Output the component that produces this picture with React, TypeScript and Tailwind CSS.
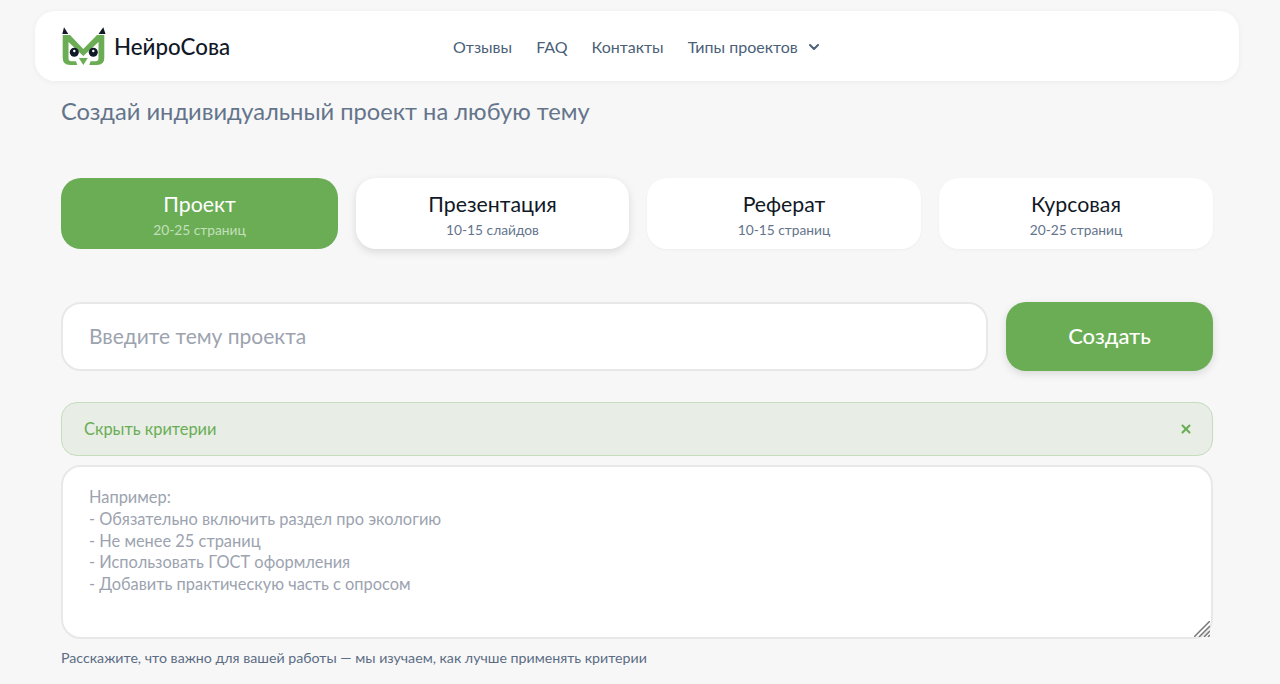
import { useState } from "react";
import { ChevronDown, X } from "lucide-react";

const tabs = [
  { title: "Проект", sub: "20-25 страниц" },
  { title: "Презентация", sub: "10-15 слайдов" },
  { title: "Реферат", sub: "10-15 страниц" },
  { title: "Курсовая", sub: "20-25 страниц" },
];

const Logo = () => (
  <svg width="46" height="40" viewBox="0 0 46 40" fill="none">
    <path d="M3 1.3 L7.3 8 L1.3 8 Z" fill="#111827" />
    <path d="M42.3 1.3 L44.5 8 L37.5 8 Z" fill="#111827" />
    <path
      d="M1.7 9 L9 9 L22.3 23 L36 9 L43.3 9 L43.3 32 Q43.3 39 36 39 L28.3 39 L29.5 35.2 L34.5 35.2 Q37.5 35.2 37.5 32 L37.5 16 L22.3 30 L7.5 16 L7.5 32 Q7.5 35.2 10.5 35.2 L15 35.2 L16.3 39 L9 39 Q1.7 39 1.7 32 Z"
      fill="#6aad55"
    />
    <circle cx="13.3" cy="26.3" r="4.5" fill="#111827" />
    <circle cx="32.3" cy="26.3" r="4.5" fill="#111827" />
    <circle cx="13.3" cy="25" r="1.2" fill="#fff" />
    <circle cx="32.3" cy="25" r="1.2" fill="#fff" />
    <path d="M17.8 32 L26.8 32 L22.3 39 Z" fill="#6aad55" />
  </svg>
);

export default function App() {
  const [active] = useState(0);

  return (
    <div className="h-[684px] overflow-hidden bg-[#f7f7f7] font-['Lato','Noto_Sans',sans-serif]">
      <div className="px-[35px] pt-[11px] pr-[41px]">
        <header className="flex h-[70px] items-center rounded-[20px] bg-white pl-[26px] shadow-[0_1px_6px_rgba(0,0,0,0.05)]">
          <div className="flex w-[392px] items-center gap-[7px]">
            <Logo />
            <span className="pt-[2px] text-[22.3px] font-medium text-[#111827]">НейроСова</span>
          </div>
          <nav className="flex items-center gap-[24px] pt-[1px] text-[16px] text-[#4b5f78]">
            <a>Отзывы</a>
            <a>FAQ</a>
            <a>Контакты</a>
            <a className="flex items-center gap-[8px]">
              Типы проектов
              <ChevronDown size={16} strokeWidth={3} />
            </a>
          </nav>
        </header>
      </div>

      <main className="px-[61px] pr-[67px]">
        <h1 className="mt-[15px] text-[23.7px] leading-[30px] text-[#64748b]">
          Создай индивидуальный проект на любую тему
        </h1>

        <div className="mt-[52px] grid grid-cols-[277px_273px_274px_274px] gap-[18px]">
          {tabs.map((t, i) => (
            <button
              key={t.title}
              className={`flex h-[71px] flex-col items-center justify-center rounded-[20px] ${
                i === active
                  ? "bg-[#6aad55] text-white"
                  : i === 1
                    ? "bg-white text-[#111827] shadow-[0_3px_8px_rgba(0,0,0,0.12)]"
                    : "bg-white text-[#111827] shadow-[0_1px_3px_rgba(0,0,0,0.04)]"
              }`}
            >
              <span className="pt-[1px] text-[21.3px] leading-[28px]">{t.title}</span>
              <span
                className={`mt-[3px] text-[13.75px] leading-[18px] ${
                  i === active ? "text-[#c4e0bb]" : "text-[#64748b]"
                }`}
              >
                {t.sub}
              </span>
            </button>
          ))}
        </div>

        <div className="mt-[53px] flex gap-[18px]">
          <input
            placeholder="Введите тему проекта"
            className="h-[69px] flex-1 rounded-[20px] border-2 border-[#e8e8e8] bg-white px-[26px] pb-[2px] text-[21px] outline-none placeholder:text-[#9ca3af]"
          />
          <button className="h-[69px] w-[207px] rounded-[20px] bg-[#6aad55] pb-[2px] text-[22px] font-medium text-white shadow-[0_3px_8px_rgba(0,0,0,0.12)]">
            Создать
          </button>
        </div>

        <div className="mt-[31px] flex h-[54px] items-center justify-between rounded-[16px] border border-[#c5ddbd] bg-[#e8ede5] pr-[19px] pl-[22px] text-[16.4px] text-[#6aad55]">
          <span>Скрыть критерии</span>
          <X size={14} strokeWidth={3.5} />
        </div>

        <div className="relative mt-[9px]">
          <textarea
            rows={7}
            placeholder={
              "Например:\n- Обязательно включить раздел про экологию\n- Не менее 25 страниц\n- Использовать ГОСТ оформления\n- Добавить практическую часть с опросом"
            }
            className="block h-[174px] w-full resize-none rounded-[20px] border-2 border-[#e8e8e8] bg-white px-[26px] pt-[19px] text-[16.4px] leading-[21.75px] outline-none placeholder:text-[#9ca3af]"
          />
          {/* resize grip */}
          <svg className="absolute right-[3px] bottom-[2px]" width="16" height="16" viewBox="0 0 16 16" stroke="#777" strokeWidth="1.5">
            <path d="M0 16 L16 0 M5 16 L16 5 M10 16 L16 10 M14 16 L16 14" />
          </svg>
        </div>

        <p className="mt-[9px] text-[14.2px] leading-[20px] text-[#5b6d84]">
          Расскажите, что важно для вашей работы — мы изучаем, как лучше применять критерии
        </p>
      </main>
    </div>
  );
}
